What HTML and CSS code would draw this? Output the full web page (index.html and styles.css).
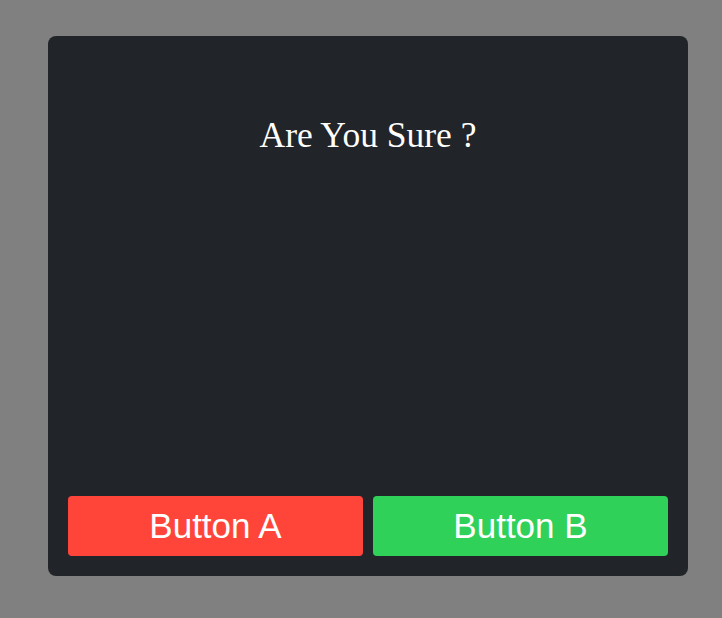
FILE: index.html
```html
<!DOCTYPE html>
<html>
<head>
<meta charset="utf-8">
<link rel="stylesheet" href="styles.css">
</head>
<body>
<div class="dialog">
  <div class="title">Are You Sure ?</div>
  <div class="actions">
    <button class="btn btn-a">Button A</button>
    <button class="btn btn-b">Button B</button>
  </div>
</div>
</body>
</html>
```
FILE: styles.css
```css
html, body {
  margin: 0;
  padding: 0;
  background: #808080;
}
body {
  padding: 36px 0 0 48px;
}
.dialog {
  width: 640px;
  height: 540px;
  box-sizing: border-box;
  background: #212428;
  border-radius: 8px;
  padding: 20px;
  display: flex;
  flex-direction: column;
}
.title {
  margin-top: 58px;
  text-align: center;
  color: #ffffff;
  font-family: "Liberation Serif", "Times New Roman", serif;
  font-size: 35.5px;
}
.actions {
  margin-top: auto;
  display: flex;
  gap: 10px;
}
.btn {
  flex: 1;
  height: 60px;
  border: none;
  border-radius: 4px;
  color: #ffffff;
  font-family: "Liberation Sans", Arial, sans-serif;
  font-size: 35px;
  padding: 0;
}
.btn-a { background: #ff453a; }
.btn-b { background: #30d158; }
```
